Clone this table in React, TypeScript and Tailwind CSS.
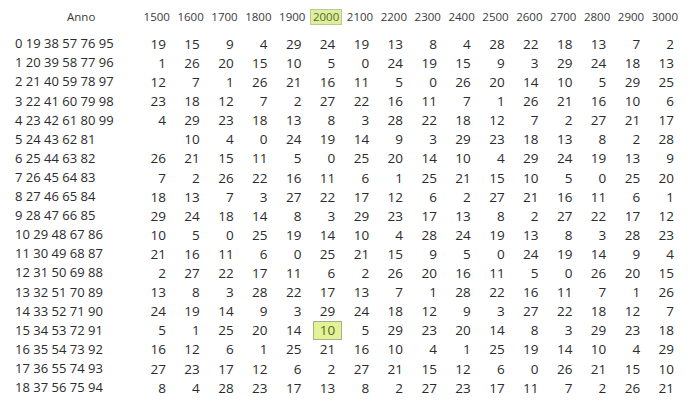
import React from "react";

const years = [1500,1600,1700,1800,1900,2000,2100,2200,2300,2400,2500,2600,2700,2800,2900,3000];

const rows: { label: string; vals: (number | null)[] }[] = [
  { label: "0 19 38 57 76 95", vals: [19,15,9,4,29,24,19,13,8,4,28,22,18,13,7,2] },
  { label: "1 20 39 58 77 96", vals: [1,26,20,15,10,5,0,24,19,15,9,3,29,24,18,13] },
  { label: "2 21 40 59 78 97", vals: [12,7,1,26,21,16,11,5,0,26,20,14,10,5,29,25] },
  { label: "3 22 41 60 79 98", vals: [23,18,12,7,2,27,22,16,11,7,1,26,21,16,10,6] },
  { label: "4 23 42 61 80 99", vals: [4,29,23,18,13,8,3,28,22,18,12,7,2,27,21,17] },
  { label: "5 24 43 62 81", vals: [null,10,4,0,24,19,14,9,3,29,23,18,13,8,2,28] },
  { label: "6 25 44 63 82", vals: [26,21,15,11,5,0,25,20,14,10,4,29,24,19,13,9] },
  { label: "7 26 45 64 83", vals: [7,2,26,22,16,11,6,1,25,21,15,10,5,0,25,20] },
  { label: "8 27 46 65 84", vals: [18,13,7,3,27,22,17,12,6,2,27,21,16,11,6,1] },
  { label: "9 28 47 66 85", vals: [29,24,18,14,8,3,29,23,17,13,8,2,27,22,17,12] },
  { label: "10 29 48 67 86", vals: [10,5,0,25,19,14,10,4,28,24,19,13,8,3,28,23] },
  { label: "11 30 49 68 87", vals: [21,16,11,6,0,25,21,15,9,5,0,24,19,14,9,4] },
  { label: "12 31 50 69 88", vals: [2,27,22,17,11,6,2,26,20,16,11,5,0,26,20,15] },
  { label: "13 32 51 70 89", vals: [13,8,3,28,22,17,13,7,1,28,22,16,11,7,1,26] },
  { label: "14 33 52 71 90", vals: [24,19,14,9,3,29,24,18,12,9,3,27,22,18,12,7] },
  { label: "15 34 53 72 91", vals: [5,1,25,20,14,10,5,29,23,20,14,8,3,29,23,18] },
  { label: "16 35 54 73 92", vals: [16,12,6,1,25,21,16,10,4,1,25,19,14,10,4,29] },
  { label: "17 36 55 74 93", vals: [27,23,17,12,6,2,27,21,15,12,6,0,26,21,15,10] },
  { label: "18 37 56 75 94", vals: [8,4,28,23,17,13,8,2,27,23,17,11,7,2,26,21] },
];

export default function App() {
  return (
    <div
      className="w-[697px] h-[412px] bg-white text-[#2b2b2b] overflow-hidden"
      style={{ fontFamily: '"Open Sans", "Noto Sans", sans-serif' }}
    >
      <div className="flex items-center h-[20px] mt-[7px] text-[11.5px] text-[#3a3a3a]">
        <div className="w-[139px] shrink-0 pl-[67px]">Anno</div>
        {years.map((y) => (
          <div key={y} className="w-[33.875px] shrink-0 text-right">
            {y === 2000 ? (
              <span className="inline-block px-[2px] border border-[#c3c78f] bg-[#dcefa0] text-[#5d6b1c] leading-[14px]">
                {y}
              </span>
            ) : (
              <span className="inline-block px-[2px] border border-transparent leading-[14px]">{y}</span>
            )}
          </div>
        ))}
      </div>
      <div className="mt-[7.5px] text-[13.5px]">
        {rows.map((r, i) => (
          <div key={i} className="flex items-center h-[19.1px]">
            <div className="w-[136px] shrink-0 pl-[15px] whitespace-nowrap text-[13px]">{r.label}</div>
            {r.vals.map((v, j) => (
              <div key={j} className="w-[33.875px] shrink-0 text-right pr-[4px]">
                {i === 15 && j === 5 ? (
                  <span className="inline-block h-[19px] leading-[17px] px-[6px] -mr-[7px] border border-[#a9ad8c] bg-[#e2f296] text-[#5d6b1c]">
                    {v}
                  </span>
                ) : (
                  v ?? ""
                )}
              </div>
            ))}
          </div>
        ))}
      </div>
    </div>
  );
}
